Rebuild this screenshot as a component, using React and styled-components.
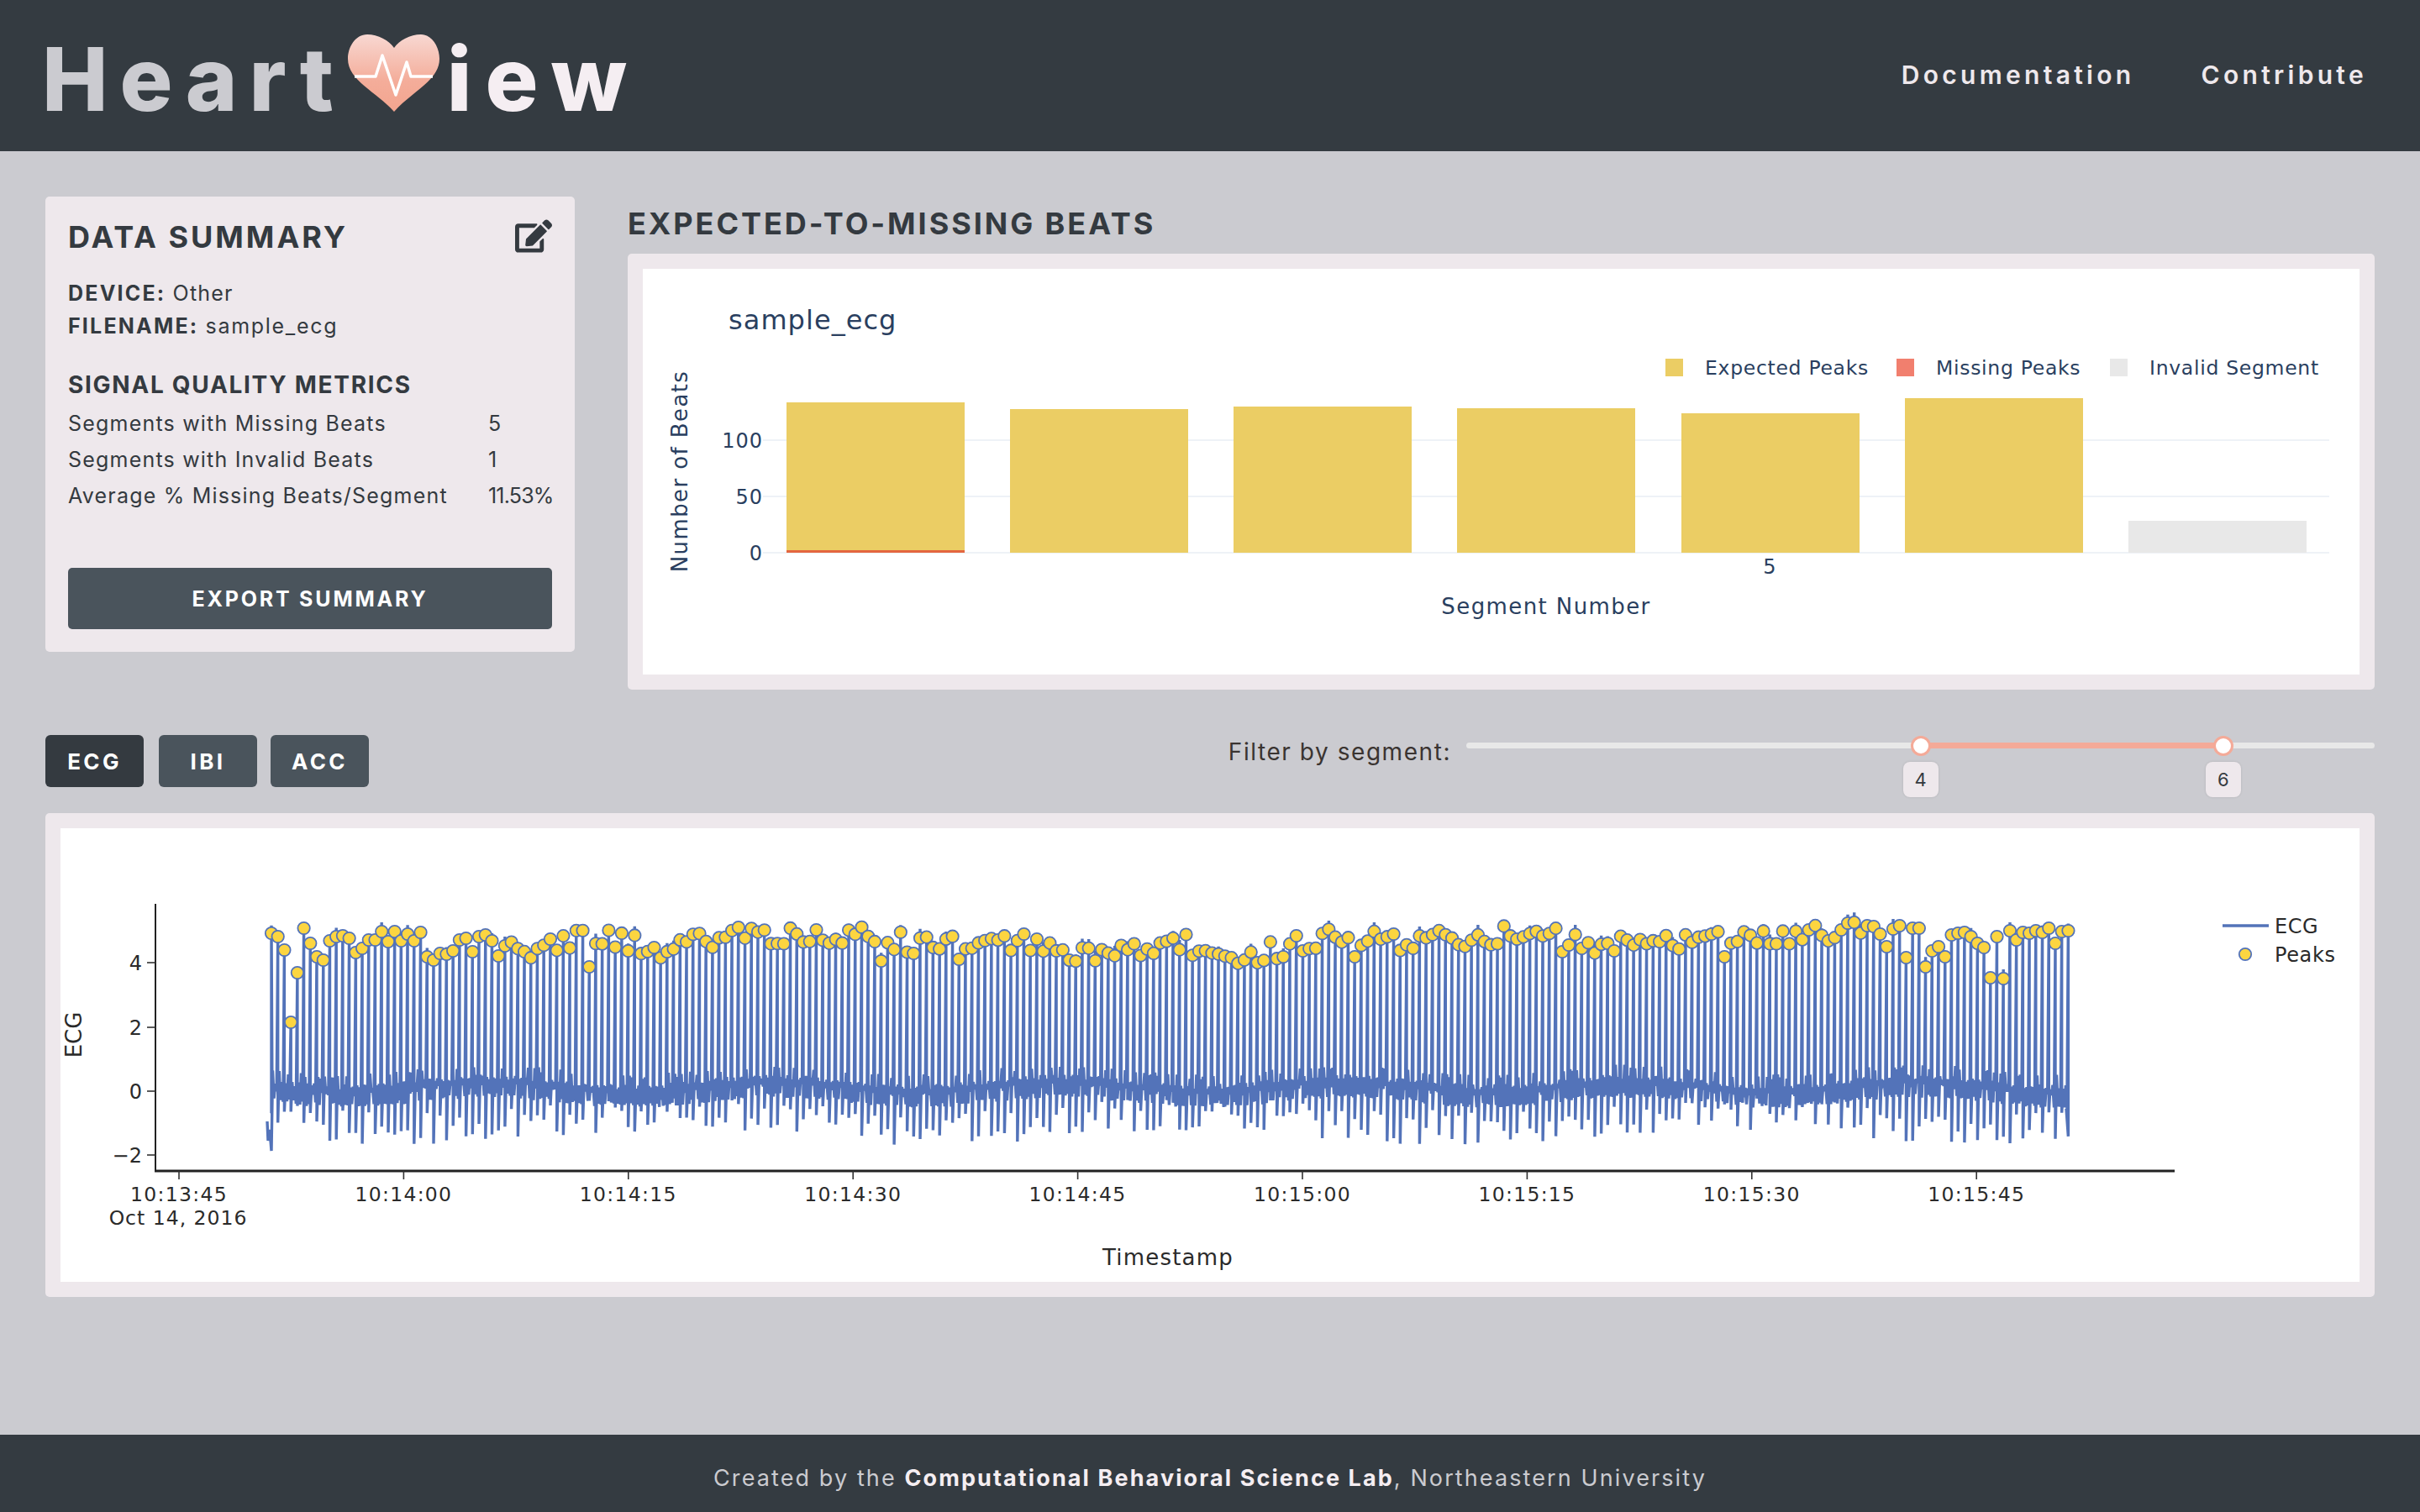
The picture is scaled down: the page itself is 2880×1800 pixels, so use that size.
import React from 'react';
import styled, { createGlobalStyle } from 'styled-components';
import { FaEdit } from 'react-icons/fa';

const UI_FONT = "Inter, 'Noto Sans', sans-serif";
const PLOT_FONT = "'DejaVu Sans', Verdana, sans-serif";

// first and last peaks read off the trace, the middle is generated
const HEAD_PEAKS = [1111, 1115, 1131, 1217, 1158, 1105, 1123, 1139, 1143, 1120, 1115, 1114, 1117, 1134, 1129, 1119, 1119, 1109, 1121, 1109, 1120, 1112, 1120, 1110, 1139, 1143, 1135, 1136, 1132, 1119, 1117, 1133, 1115, 1113, 1120, 1138, 1126];
const TAIL_PEAKS = [1102, 1103, 1112, 1127, 1106, 1102, 1140, 1105, 1105, 1151, 1132, 1127, 1139, 1113, 1111, 1110, 1115, 1123, 1128, 1164, 1115, 1165, 1108, 1119, 1110, 1111, 1108, 1110, 1105, 1123, 1109, 1108];

// slow drift of the peak line: [x, y] in page pixels
const PEAK_DRIFT = [[500, 1118], [620, 1134], [700, 1113], [790, 1130], [880, 1112], [1030, 1112], [1090, 1124], [1180, 1117], [1285, 1135], [1400, 1120], [1470, 1140], [1600, 1112], [1640, 1122], [1850, 1111], [1900, 1124], [2040, 1116], [2150, 1112], [2190, 1106]];
// single low beats: [x, y]
const PEAK_DIPS = [[703, 1151], [1047, 1144], [1091, 1135], [1142, 1142], [1616, 1139], [1859, 1133], [2052, 1139]];

function makeRandom(seed) {
  let s = seed;
  return () => {
    s = (s * 1664525 + 1013904223) % 4294967296;
    return s / 4294967296;
  };
}

function driftAt(x) {
  for (let i = 1; i < PEAK_DRIFT.length; i++) {
    const [x0, y0] = PEAK_DRIFT[i - 1];
    const [x1, y1] = PEAK_DRIFT[i];
    if (x <= x1) return y0 + ((y1 - y0) * (x - x0)) / (x1 - x0);
  }
  return 1104;
}

function buildEcg() {
  const rand = makeRandom(77);
  const beats = [];
  const step = 7.72;
  const count = Math.round((2460 - 323) / step);
  for (let i = 0; i <= count; i++) {
    const x = 323 + i * step;
    let peak;
    if (i < HEAD_PEAKS.length) peak = HEAD_PEAKS[i];
    else if (i > count - TAIL_PEAKS.length) peak = TAIL_PEAKS[i - (count - TAIL_PEAKS.length) - 1];
    else {
      peak = driftAt(x) + (rand() - 0.5) * 24;
      const dip = PEAK_DIPS.find((d) => Math.abs(d[0] - x) < step / 2);
      if (dip) peak = dip[1];
    }
    const trough = 1335 + Math.sin(i / 13) * 8 + (rand() - 0.5) * 42;
    beats.push({ x, peak, trough, over: rand() < 0.3 ? 6 + rand() * 6 : 0 });
  }
  return beats;
}

function ecgPath(beats) {
  const rand = makeRandom(11);
  let d = 'M318 1335 L319 1358 L321 1345 L323 1370 L324 1310';
  beats.forEach((b, i) => {
    const next = beats[i + 1];
    d += ` L${b.x.toFixed(1)} ${(b.peak - b.over).toFixed(1)} L${b.x.toFixed(1)} ${b.trough.toFixed(1)}`;
    if (!next) {
      d += ' L2459 1320 L2460 1332 L2460 1300';
      return;
    }
    const mid = 1298 + Math.sin(i / 7) * 6;
    const steps = 5;
    for (let k = 1; k < steps; k++) {
      const x = b.x + ((next.x - b.x) * k) / steps;
      const tall = rand() < 0.3 ? -12 : 0;
      const y = mid + (k % 2 ? -10 : 12) + (rand() - 0.5) * 6 + tall;
      d += ` L${x.toFixed(1)} ${y.toFixed(1)}`;
    }
  });
  return d;
}

const BEATS = buildEcg();
const ECG_PATH = ecgPath(BEATS);

const BARS = [
  { x: 936, top: 479, missing: true },
  { x: 1202, top: 487 },
  { x: 1468, top: 484 },
  { x: 1734, top: 486 },
  { x: 2001, top: 492 },
  { x: 2267, top: 474 },
  { x: 2533, top: 620, invalid: true },
];

const BAR_LEGEND = [
  { x: 1982, text: 'Expected Peaks', color: '#ebcd64' },
  { x: 2257, text: 'Missing Peaks', color: '#f17f6e' },
  { x: 2511, text: 'Invalid Segment', color: '#e8e8e8' },
];

const TIME_TICKS = ['10:13:45', '10:14:00', '10:14:15', '10:14:30', '10:14:45', '10:15:00', '10:15:15', '10:15:30', '10:15:45'];
const ECG_Y_TICKS = [
  { y: 1146, label: '4' },
  { y: 1223, label: '2' },
  { y: 1299, label: '0' },
  { y: 1375, label: '\u22122' },
];

const METRICS = [
  { label: 'Segments with Missing Beats', value: '5' },
  { label: 'Segments with Invalid Beats', value: '1' },
  { label: 'Average % Missing Beats/Segment', value: '11.53%' },
];

function HeartMark() {
  return (
    <HeartSvg viewBox="0 0 110 92">
      <defs>
        <linearGradient id="heartFill" x1="0" y1="0" x2="0" y2="1">
          <stop offset="0" stopColor="#f8d8d2" />
          <stop offset="0.6" stopColor="#f4ad9a" />
          <stop offset="1" stopColor="#f3a58f" />
        </linearGradient>
      </defs>
      <path
        d="M55 16 C49 7 36 0 23 0 C9 0 0 15 0 29 C0 55 34 68 55 92 C76 68 109 55 109 29 C109 15 100 0 87 0 C74 0 61 7 55 16 Z"
        fill="url(#heartFill)"
      />
      <polyline
        points="8,50 33,50 41,25 57,72 70,33 75,50 101,50"
        fill="none"
        stroke="#fff"
        strokeWidth="3.5"
        strokeLinejoin="round"
      />
    </HeartSvg>
  );
}

function BeatsChart() {
  return (
    <PlotSvg viewBox="765 320 2043 483" $height={483}>
      <PlotLabel x={867} y={392} $size={32} $spacing={1.05}>sample_ecg</PlotLabel>
      {[524, 591, 658].map((y) => (
        <line key={y} x1={908} x2={2772} y1={y} y2={y} stroke="#eef2f7" strokeWidth="2" />
      ))}
      {[
        { y: 524, label: '100' },
        { y: 591, label: '50' },
        { y: 658, label: '0' },
      ].map((t) => (
        <PlotLabel key={t.y} x={908} y={t.y + 9} textAnchor="end" $size={24} $spacing={1}>{t.label}</PlotLabel>
      ))}
      {BARS.map((b) => (
        <rect key={b.x} x={b.x} y={b.top} width={212} height={658 - b.top} fill={b.invalid ? '#e8e8e8' : '#ebcd64'} />
      ))}
      <rect x={936} y={655} width={212} height={3} fill="#e4663f" />
      {BAR_LEGEND.map((l) => (
        <g key={l.text}>
          <rect x={l.x} y={427} width={21} height={21} fill={l.color} />
          <PlotLabel x={l.x + 47} y={446} $size={23.5} $spacing={0.7}>{l.text}</PlotLabel>
        </g>
      ))}
      <PlotLabel x={2106} y={683} textAnchor="middle" $size={24}>5</PlotLabel>
      <PlotLabel x={1840} y={731} textAnchor="middle" $size={26} $spacing={1.4}>Segment Number</PlotLabel>
      <PlotLabel transform="translate(818 561) rotate(-90)" textAnchor="middle" $size={26} $spacing={1.4}>Number of Beats</PlotLabel>
    </PlotSvg>
  );
}

function EcgChart() {
  return (
    <PlotSvg viewBox="72 986 2736 540" $height={540}>
      <path d={ECG_PATH} fill="none" stroke="#5373b9" strokeWidth="3.4" strokeLinejoin="miter" />
      {BEATS.map((b) => (
        <circle key={b.x} cx={b.x} cy={b.peak} r={7.2} fill="#fcd540" stroke="#5373b9" strokeWidth="1.8" />
      ))}
      <line x1={185} x2={185} y1={1076} y2={1395} stroke="#222" strokeWidth="2" />
      <line x1={184} x2={2588} y1={1394} y2={1394} stroke="#222" strokeWidth="3" />
      {ECG_Y_TICKS.map((t) => (
        <g key={t.y}>
          <line x1={175} x2={185} y1={t.y} y2={t.y} stroke="#333" strokeWidth="1.6" />
          <AxisLabel x={169} y={t.y + 9} textAnchor="end" $size={24}>{t.label}</AxisLabel>
        </g>
      ))}
      {TIME_TICKS.map((label, i) => {
        const x = 213 + i * 267.4;
        return (
          <g key={label}>
            <line x1={x} x2={x} y1={1394} y2={1404} stroke="#333" strokeWidth="1.6" />
            <AxisLabel x={x} y={1430} textAnchor="middle" $size={23.5} $spacing={1.3}>{label}</AxisLabel>
          </g>
        );
      })}
      <AxisLabel x={212} y={1458} textAnchor="middle" $size={23.5} $spacing={1}>Oct 14, 2016</AxisLabel>
      <AxisLabel x={1390} y={1506} textAnchor="middle" $size={26} $spacing={1.2}>Timestamp</AxisLabel>
      <AxisLabel transform="translate(97 1232) rotate(-90)" textAnchor="middle" $size={26}>ECG</AxisLabel>
      <line x1={2645} x2={2700} y1={1102} y2={1102} stroke="#5373b9" strokeWidth="3.4" />
      <AxisLabel x={2707} y={1111} $size={24} $spacing={0.6}>ECG</AxisLabel>
      <circle cx={2672} cy={1136} r={7.2} fill="#fcd540" stroke="#5373b9" strokeWidth="1.8" />
      <AxisLabel x={2707} y={1145} $size={24} $spacing={0.6}>Peaks</AxisLabel>
    </PlotSvg>
  );
}

export default function App() {
  return (
    <Page>
      <GlobalStyle />
      <TopBar>
        <Logo>
          <LogoPart $light={false}>Heart</LogoPart>
          <HeartMark />
          <LogoPart $light>iew</LogoPart>
        </Logo>
        <Nav>
          <NavLink>Documentation</NavLink>
          <NavLink>Contribute</NavLink>
        </Nav>
      </TopBar>

      <Main>
        <TopRow>
          <SummaryCard>
            <SummaryHead>
              <SummaryTitle>DATA SUMMARY</SummaryTitle>
              <FaEdit size={44} color="#343a40" />
            </SummaryHead>
            <InfoLine>
              <b>DEVICE:</b> Other
            </InfoLine>
            <InfoLine>
              <b>FILENAME:</b> <InfoValue>sample_ecg</InfoValue>
            </InfoLine>
            <MetricsTitle>SIGNAL QUALITY METRICS</MetricsTitle>
            {METRICS.map((m) => (
              <MetricRow key={m.label}>
                <span>{m.label}</span>
                <MetricValue>{m.value}</MetricValue>
              </MetricRow>
            ))}
            <ExportButton>EXPORT SUMMARY</ExportButton>
          </SummaryCard>

          <ChartColumn>
            <ChartHeading>EXPECTED-TO-MISSING BEATS</ChartHeading>
            <ChartCard>
              <BeatsChart />
            </ChartCard>
          </ChartColumn>
        </TopRow>

        <Toolbar>
          <Tabs>
            <TabButton $active>ECG</TabButton>
            <TabButton>IBI</TabButton>
            <TabButton>ACC</TabButton>
          </Tabs>
          <FilterGroup>
            <FilterLabel>Filter by segment:</FilterLabel>
            <SliderRail>
              <SliderRange />
              <SliderThumb $at={50}>
                <ThumbTip>4</ThumbTip>
              </SliderThumb>
              <SliderThumb $at={83.33}>
                <ThumbTip>6</ThumbTip>
              </SliderThumb>
            </SliderRail>
          </FilterGroup>
        </Toolbar>

        <ChartCard>
          <EcgChart />
        </ChartCard>
      </Main>

      <Footer>
        Created by the <FooterStrong>Computational Behavioral Science Lab</FooterStrong>, Northeastern University
      </Footer>
    </Page>
  );
}

const GlobalStyle = createGlobalStyle`
  * {
    box-sizing: border-box;
  }

  body {
    margin: 0;
    background: #cbcbd0;
    font-family: ${UI_FONT};
  }
`;

const Page = styled.div`
  min-height: 1800px;
  display: flex;
  flex-direction: column;
  color: #343a40;
`;

const TopBar = styled.header`
  height: 180px;
  flex: none;
  background: #343b41;
  display: flex;
  align-items: center;
  justify-content: space-between;
  padding: 0 63px 0 50px;
`;

const Logo = styled.div`
  display: flex;
  align-items: center;
`;

const LogoPart = styled.span`
  font-size: 105px;
  font-weight: 800;
  line-height: 1;
  letter-spacing: ${(p) => (p.$light ? '16px' : '14px')};
  color: ${(p) => (p.$light ? '#f5eef2' : '#cbcbd0')};
  margin-top: 6px;
`;

const HeartSvg = styled.svg`
  width: 110px;
  height: 92px;
  margin: -6px 8px 0 3px;
`;

const Nav = styled.nav`
  display: flex;
  gap: 79px;
  margin-top: -2px;
`;

const NavLink = styled.a`
  font-size: 30px;
  font-weight: 600;
  letter-spacing: 4.3px;
  color: #eee8ec;
`;

const Main = styled.main`
  padding: 54px 54px 0;
  display: flex;
  flex-direction: column;
`;

const TopRow = styled.section`
  display: grid;
  grid-template-columns: 630px 1fr;
  gap: 63px;
`;

const SummaryCard = styled.div`
  height: 542px;
  background: #eee8ec;
  border-radius: 5px;
  padding: 24px 27px 27px;
  display: flex;
  flex-direction: column;
`;

const SummaryHead = styled.div`
  height: 46px;
  display: flex;
  align-items: center;
  justify-content: space-between;
  margin-bottom: 26px;
`;

const SummaryTitle = styled.h2`
  margin: 2px 0 0;
  font-size: 36px;
  font-weight: 700;
  letter-spacing: 3px;
`;

const InfoLine = styled.div`
  font-size: 25px;
  line-height: 39px;
  letter-spacing: 1.2px;

  b {
    font-weight: 700;
    letter-spacing: 2.2px;
  }
`;

const InfoValue = styled.span`
  letter-spacing: 1.7px;
`;

const MetricsTitle = styled.h3`
  margin: 30px 0 5px;
  font-size: 28px;
  line-height: 40px;
  font-weight: 700;
  letter-spacing: 1.7px;
`;

const MetricRow = styled.div`
  display: grid;
  grid-template-columns: 500px 1fr;
  font-size: 25px;
  line-height: 43px;
  letter-spacing: 1.2px;
`;

const MetricValue = styled.span`
  letter-spacing: -0.8px;
`;

const ExportButton = styled.button`
  margin-top: auto;
  height: 73px;
  border: none;
  border-radius: 5px;
  background: #4a545c;
  color: #fff;
  font-family: inherit;
  font-size: 25px;
  font-weight: 700;
  letter-spacing: 2.8px;
`;

const ChartColumn = styled.div`
  display: flex;
  flex-direction: column;
`;

const ChartHeading = styled.h2`
  margin: 12px 0 16px;
  font-size: 36px;
  line-height: 40px;
  font-weight: 700;
  letter-spacing: 2.95px;
`;

const ChartCard = styled.div`
  background: #eee8ec;
  border-radius: 5px;
  padding: 18px;
`;

const PlotSvg = styled.svg`
  display: block;
  width: 100%;
  height: ${(p) => p.$height}px;
  background: #fff;
`;

const PlotLabel = styled.text`
  font-family: ${PLOT_FONT};
  font-size: ${(p) => p.$size}px;
  letter-spacing: ${(p) => p.$spacing || 0}px;
  fill: #2a3f5f;
`;

const AxisLabel = styled.text`
  font-family: ${PLOT_FONT};
  font-size: ${(p) => p.$size}px;
  letter-spacing: ${(p) => p.$spacing || 0}px;
  fill: #2a2a2a;
`;

const Toolbar = styled.section`
  height: 75px;
  margin: 54px 0 18px;
  display: flex;
  justify-content: space-between;
  align-items: flex-start;
`;

const Tabs = styled.div`
  display: flex;
  gap: 16px;
`;

const TabButton = styled.button`
  width: 117px;
  height: 62px;
  margin-right: ${(p) => (p.$active ? '2px' : '0')};
  border: none;
  border-radius: 6px;
  background: ${(p) => (p.$active ? '#343a40' : '#4a545c')};
  color: #fff;
  font-family: inherit;
  font-size: 26px;
  font-weight: 700;
  letter-spacing: 3.4px;
`;

const FilterGroup = styled.div`
  display: flex;
  align-items: flex-start;
  gap: 18px;
`;

const FilterLabel = styled.span`
  font-size: 28px;
  line-height: 40px;
  letter-spacing: 1.55px;
  color: #3a3431;
`;

const SliderRail = styled.div`
  position: relative;
  width: 1081px;
  height: 7px;
  margin-top: 9px;
  border-radius: 4px;
  background: #e8e8e8;
`;

const SliderRange = styled.div`
  position: absolute;
  left: 50%;
  width: 33.33%;
  top: 0;
  bottom: 0;
  background: #f4aa98;
`;

const SliderThumb = styled.div`
  position: absolute;
  left: ${(p) => p.$at}%;
  top: 50%;
  width: 24px;
  height: 24px;
  margin: -12px 0 0 -12px;
  border-radius: 50%;
  background: #fff;
  border: 3px solid #f4aa98;
`;

const ThumbTip = styled.div`
  position: absolute;
  top: 28px;
  left: 50%;
  transform: translateX(-50%);
  width: 42px;
  height: 42px;
  border-radius: 8px;
  background: #eee8ec;
  box-shadow: 0 0 3px rgba(0, 0, 0, 0.12);
  display: flex;
  align-items: center;
  justify-content: center;
  font-size: 22px;
  color: #343a40;
`;

const Footer = styled.footer`
  margin-top: auto;
  height: 92px;
  flex: none;
  background: #343b41;
  color: #cbcbd0;
  display: flex;
  align-items: center;
  justify-content: center;
  white-space: pre;
  font-size: 27px;
  letter-spacing: 2.1px;
  padding-top: 10px;
`;

const FooterStrong = styled.b`
  font-weight: 700;
  color: #f5eef2;
`;
